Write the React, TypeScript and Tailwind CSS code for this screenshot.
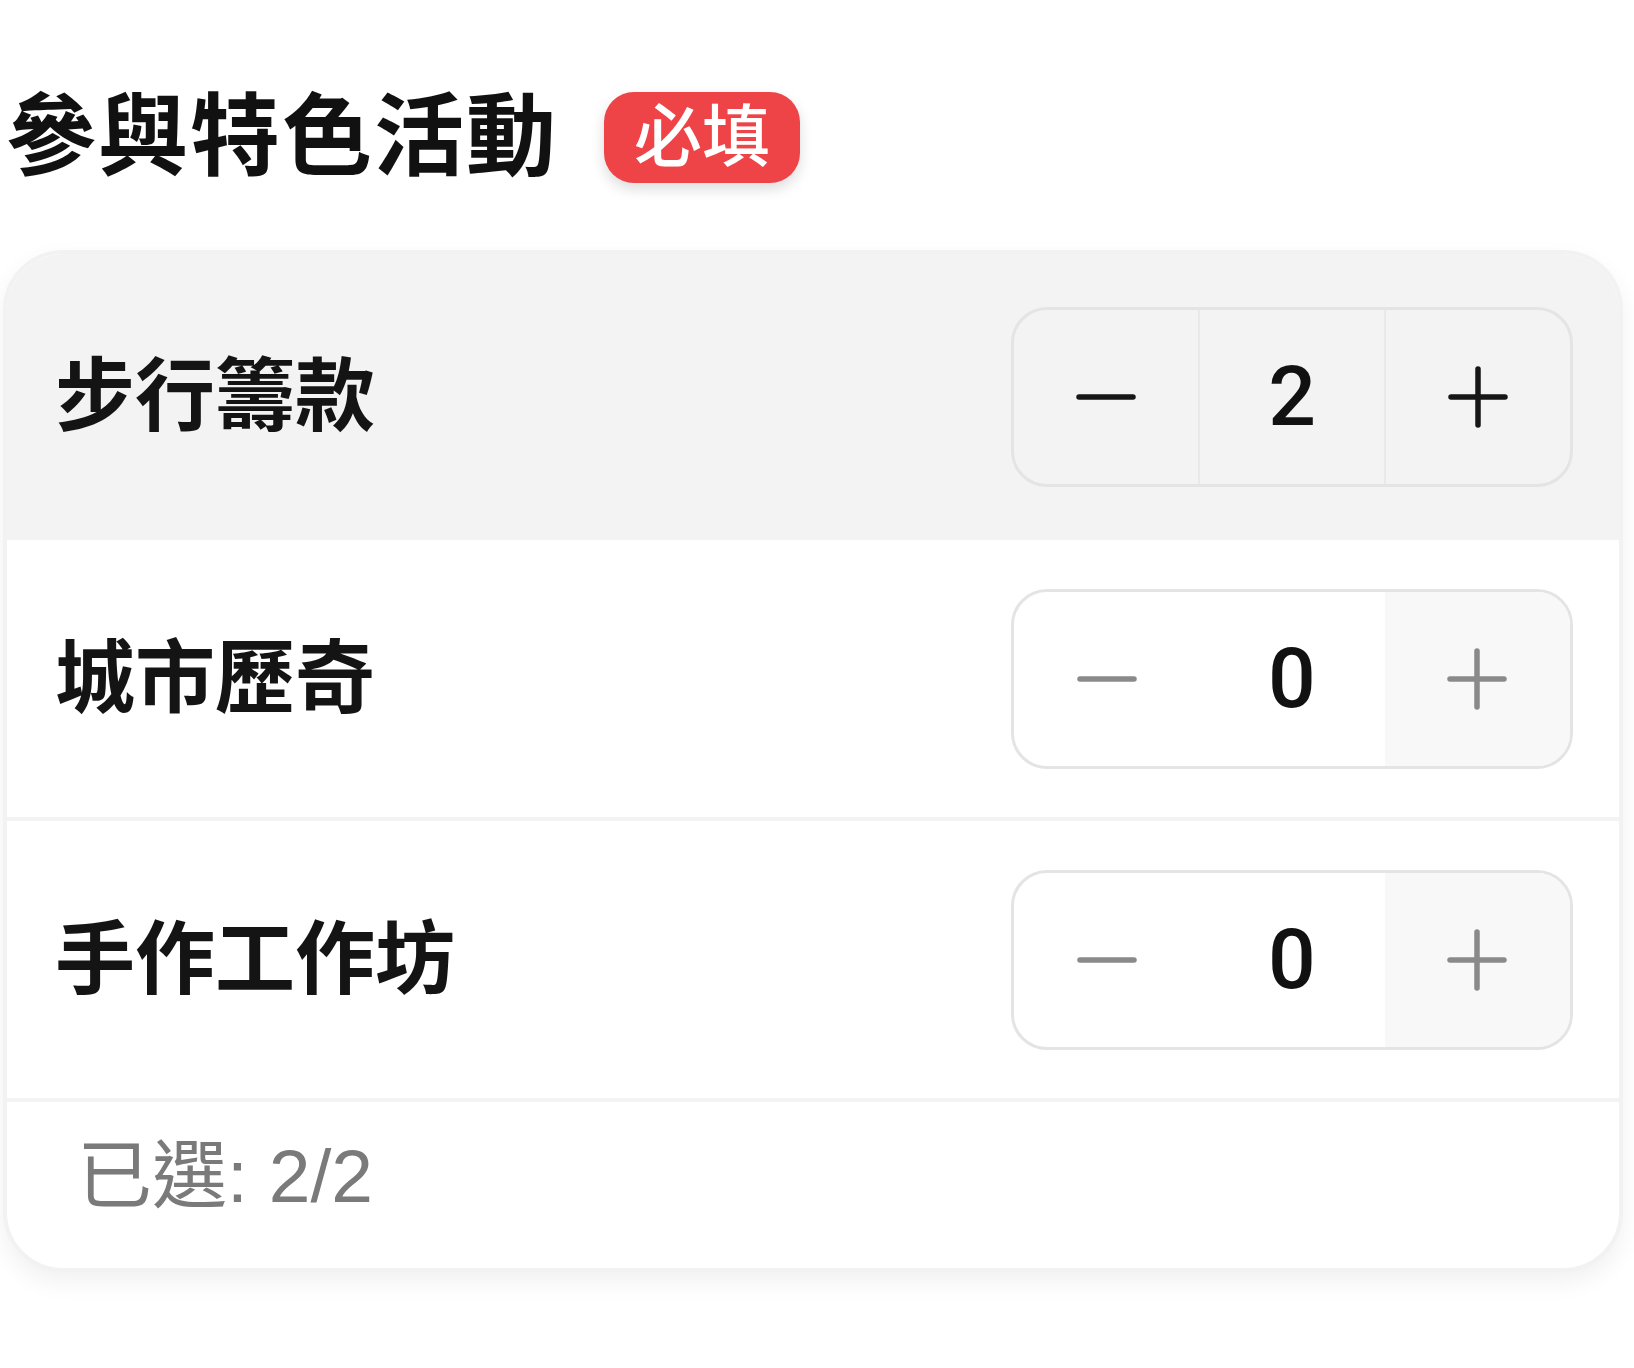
import React from "react";

type Activity = {
  name: string;
  count: number;
  active: boolean;
};

const activities: Activity[] = [
  { name: "步行籌款", count: 2, active: true },
  { name: "城市歷奇", count: 0, active: false },
  { name: "手作工作坊", count: 0, active: false }
];

const FONT = '"Liberation Sans", "Noto Sans CJK TC", sans-serif';

function MinusIcon({ color }: { color: string }) {
  return (
    <svg width="60" height="60" viewBox="0 0 60 60" fill="none">
      <line x1="3" y1="30" x2="57" y2="30" stroke={color} strokeWidth="5.5" strokeLinecap="round" />
    </svg>
  );
}

function PlusIcon({ color }: { color: string }) {
  return (
    <svg width="60" height="62" viewBox="0 0 60 62" fill="none">
      <line x1="3" y1="31" x2="57" y2="31" stroke={color} strokeWidth="5.5" strokeLinecap="round" />
      <line x1="30" y1="3" x2="30" y2="59" stroke={color} strokeWidth="5.5" strokeLinecap="round" />
    </svg>
  );
}

function Stepper({ value, active }: { value: number; active: boolean }) {
  const num = (
    <div className="flex flex-1 items-center justify-center font-['Roboto',sans-serif] text-[84px] font-medium leading-none text-[#111]">
      {value}
    </div>
  );

  if (active) {
    return (
      <div className="flex h-[180px] w-[562px] overflow-hidden rounded-[36px] border-[3px] border-[#e4e4e4] bg-[#f3f3f3]">
        <button className="flex flex-1 items-center justify-center border-r-[2px] border-[#e9e9e9]">
          <MinusIcon color="#161616" />
        </button>
        <div className="flex flex-1 border-r-[2px] border-[#e9e9e9]">{num}</div>
        <button className="flex flex-1 items-center justify-center">
          <PlusIcon color="#161616" />
        </button>
      </div>
    );
  }

  return (
    <div className="flex h-[180px] w-[562px] overflow-hidden rounded-[36px] border-[3px] border-[#e4e4e4] bg-white">
      <button className="flex flex-1 items-center justify-center">
        <MinusIcon color="#8a8a8a" />
      </button>
      {num}
      <button className="flex flex-1 items-center justify-center bg-[#f8f8f8]">
        <PlusIcon color="#8a8a8a" />
      </button>
    </div>
  );
}

export default function App() {
  const selected = activities.reduce((sum, a) => sum + a.count, 0);

  return (
    <main className="min-h-screen bg-white pt-[91px]" style={{ fontFamily: FONT }}>
      <div className="flex h-[92px] items-center pl-[6px]">
        <h2 className="text-[90px] font-bold leading-none tracking-[2px] text-[#111]">
          參與特色活動
        </h2>
        <span className="ml-[46px] flex h-[91px] items-center rounded-[30px] bg-[#ee4448] px-[30px] text-[68px] font-medium leading-none text-white shadow-[0_6px_14px_rgba(0,0,0,0.14)]">
          必填
        </span>
      </div>

      <div className="ml-[3px] mt-[67px] w-[1620px] overflow-hidden rounded-[60px] border-[4px] border-[#f2f2f2] bg-white shadow-[0_10px_24px_rgba(0,0,0,0.06)]">
        {activities.map((a, i) => (
          <div
            key={a.name}
            className={
              i === 0
                ? "flex h-[286px] items-center justify-between bg-[#f3f3f3] pl-[48px] pr-[46px]"
                : "flex h-[281px] items-center justify-between border-b-[4px] border-[#f3f3f3] pl-[48px] pr-[46px]"
            }
          >
            <span className="text-[80px] font-bold leading-none text-[#141414]">{a.name}</span>
            <Stepper value={a.count} active={a.active} />
          </div>
        ))}
        <div className="flex h-[166px] items-center pb-[18px] pl-[70px]">
          <span className="text-[75px] leading-none text-[#7a7a7a]">
            已選: {selected}/2
          </span>
        </div>
      </div>
    </main>
  );
}
